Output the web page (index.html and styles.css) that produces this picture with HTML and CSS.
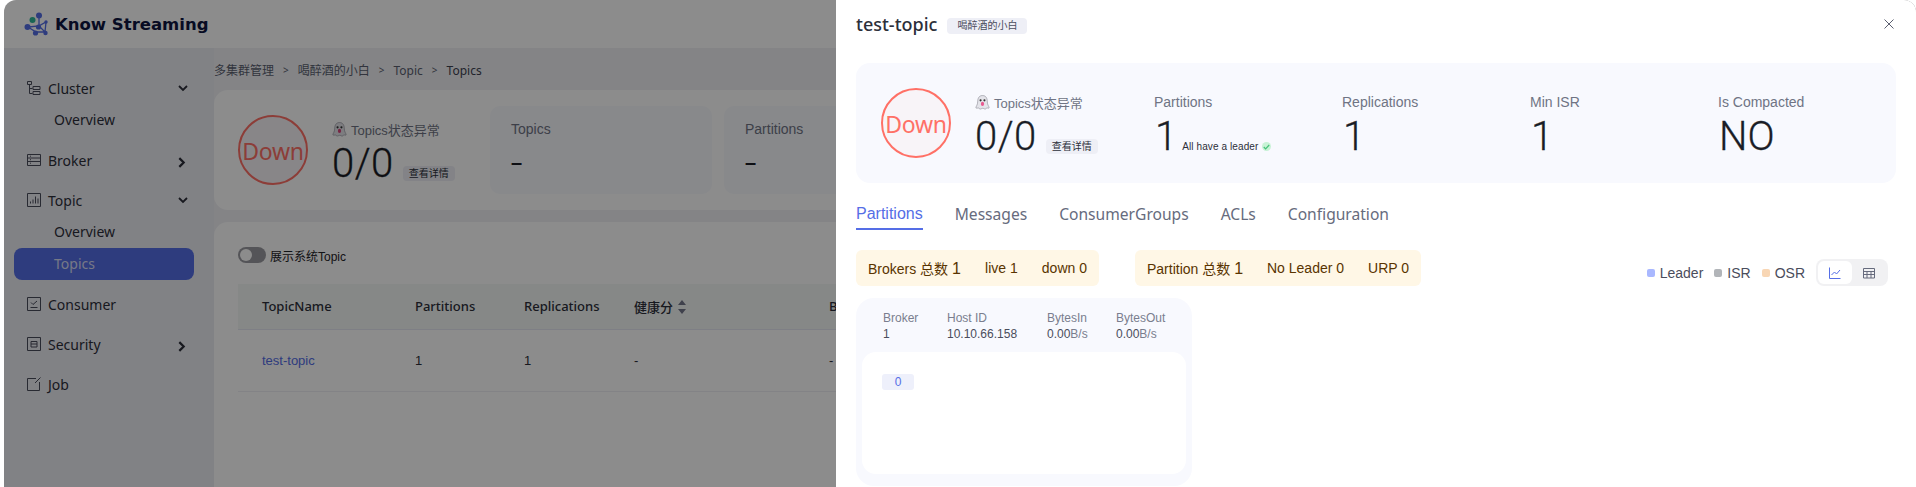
FILE: index.html
```html
<!DOCTYPE html>
<html lang="zh">
<head>
<meta charset="utf-8">
<title>Know Streaming</title>
<link rel="stylesheet" href="styles.css">
</head>
<body>
<div class="shell">
  <header class="topbar">
    <svg class="logo" width="24" height="24" viewBox="0 0 24 24">
      <g stroke="#556ee6" stroke-width="1.3" fill="none"><path d="M15 4L15 14L4 15L12 20L21 20L22 10L15 14L21 20"/></g>
      <circle cx="15" cy="3.5" r="3" fill="#556ee6"/><circle cx="8.500" cy="8" r="3" fill="#2fb89a"/><circle cx="3.500" cy="15" r="3" fill="#556ee6"/><circle cx="14.500" cy="15" r="2.600" fill="#556ee6"/><circle cx="11.500" cy="21" r="2.600" fill="#556ee6"/><circle cx="21.500" cy="21" r="2.200" fill="#556ee6"/><circle cx="22" cy="10" r="1.700" fill="#556ee6"/>
    </svg>
    <span class="brand">Know Streaming</span>
  </header>
  <div class="layout">
    <nav class="sidebar">
      <div class="nav-group">
        <div class="nav-item">
          <svg class="nav-icon" viewBox="0 0 14 14"><path d="M.5.500h4v3h-4zM2.500 3.500v9h3M2.500 7.500h3M6 5.500h7v3H6zM6 10.500h7v3H6z"/></svg>
          <span class="nav-label">Cluster</span>
          <svg class="chev" viewBox="0 0 10 10"><path d="M1 3l4 4 4-4"/></svg>
        </div>
        <div class="nav-sub">Overview</div>
      </div>
      <div class="nav-group">
        <div class="nav-item">
          <svg class="nav-icon" viewBox="0 0 14 14"><path d="M.5 1.500h13v11H.5zM.5 5h13M.5 8.500h13M3 3.200h1M3 6.700h1M3 10.200h1"/></svg>
          <span class="nav-label">Broker</span>
          <svg class="chev chev-right" viewBox="0 0 10 10"><path d="M3 1l4 4-4 4"/></svg>
        </div>
      </div>
      <div class="nav-group">
        <div class="nav-item">
          <svg class="nav-icon" viewBox="0 0 14 14"><path d="M.5.500h13v13H.5zM3.500 10.500v-2M6 10.500v-4M8.500 10.500v-7M11 10.500v-5"/></svg>
          <span class="nav-label">Topic</span>
          <svg class="chev" viewBox="0 0 10 10"><path d="M1 3l4 4 4-4"/></svg>
        </div>
        <div class="nav-sub">Overview</div>
        <div class="nav-sub nav-active">Topics</div>
      </div>
      <div class="nav-group">
        <div class="nav-item">
          <svg class="nav-icon" viewBox="0 0 14 14"><path d="M.5.500h13v13H.5zM3.500 10.500h7M4 5.500l2 2 4-3.500"/></svg>
          <span class="nav-label">Consumer</span>
        </div>
      </div>
      <div class="nav-group">
        <div class="nav-item">
          <svg class="nav-icon" viewBox="0 0 14 14"><path d="M.5.500h13v13H.5zM4 4.500h6v5.500H4zM4 7h6"/></svg>
          <span class="nav-label">Security</span>
          <svg class="chev chev-right" viewBox="0 0 10 10"><path d="M3 1l4 4-4 4"/></svg>
        </div>
      </div>
      <div class="nav-group">
        <div class="nav-item">
          <svg class="nav-icon" viewBox="0 0 14 14"><path d="M9 1.500H.5v12h12V5M13.500.500L8 6"/></svg>
          <span class="nav-label">Job</span>
        </div>
      </div>
    </nav>
    <main class="main">
      <div class="crumbs">
        <span>多集群管理</span><span class="sep">&gt;</span><span>喝醉酒的小白</span><span class="sep">&gt;</span><span>Topic</span><span class="sep">&gt;</span><span class="crumb-last">Topics</span>
      </div>
      <section class="summary">
        <div class="down-ring">Down</div>
        <div class="status status-bg">
          <div class="status-title">
            <svg class="ghost" viewBox="0 0 14 14"><path d="M7 .5C3.800.5 2.500 3 2.500 6.500 2.500 9 1 10.500.8 12c1.200.8 2-.3 2.800.3.900.9 1.600 1 2.400.5.800-.5 1.600-.5 2.400 0 .9.500 1.600.4 2.400-.5.800-.6 1.600.5 2.400-.3-.2-1.500-1.700-3-1.700-5.500C11.500 3 10.200.5 7 .5z" fill="#e4e4ea" stroke="#8f8f98" stroke-width=".6"/><circle cx="5.200" cy="5" r="1" fill="#333"/><circle cx="8.800" cy="5" r="1" fill="#333"/><ellipse cx="7" cy="8.300" rx="1.500" ry="2" fill="#d8457b"/></svg>
            <span>Topics状态异常</span>
          </div>
          <div class="status-value"><span class="big-num">0/0</span><span class="detail-btn">查看详情</span></div>
        </div>
        <div class="mini-card"><div class="mini-label">Topics</div><div class="mini-value">–</div></div>
        <div class="mini-card"><div class="mini-label">Partitions</div><div class="mini-value">–</div></div>
      </section>
      <section class="list-card">
        <div class="switch-row"><span class="switch"><span class="switch-knob"></span></span><span class="switch-text">展示系统Topic</span></div>
        <table class="grid">
          <thead>
            <tr><th class="c-name">TopicName</th><th class="c-part">Partitions</th><th class="c-rep">Replications</th><th class="c-health">健康分 <svg class="sort" width="8" height="14" viewBox="0 0 8 14"><path d="M4 0l4 5H0zM4 14l4-5H0z"/></svg></th><th>B</th></tr>
          </thead>
          <tbody>
            <tr><td class="c-name link">test-topic</td><td>1</td><td>1</td><td>-</td><td>-</td></tr>
          </tbody>
        </table>
      </section>
    </main>
  </div>
  <div class="mask"></div>
  <aside class="drawer">
    <div class="drawer-head">
      <span class="drawer-title">test-topic</span>
      <span class="drawer-tag">喝醉酒的小白</span>
      <svg class="close" viewBox="0 0 10 10"><path d="M.5.500l9 9M9.500.500l-9 9"/></svg>
    </div>
    <section class="stats">
      <div class="down-ring ring-live">Down</div>
      <div class="status">
        <div class="status-title">
          <svg class="ghost" viewBox="0 0 14 14"><path d="M7 .5C3.800.5 2.500 3 2.500 6.500 2.500 9 1 10.500.8 12c1.200.8 2-.3 2.800.3.900.9 1.600 1 2.400.5.800-.5 1.600-.5 2.400 0 .9.500 1.600.4 2.400-.5.800-.6 1.600.5 2.400-.3-.2-1.500-1.700-3-1.700-5.500C11.500 3 10.200.5 7 .5z" fill="#e4e4ea" stroke="#8f8f98" stroke-width=".6"/><circle cx="5.200" cy="5" r="1" fill="#333"/><circle cx="8.800" cy="5" r="1" fill="#333"/><ellipse cx="7" cy="8.300" rx="1.500" ry="2" fill="#e85a90"/></svg>
          <span>Topics状态异常</span>
        </div>
        <div class="status-value"><span class="big-num">0/0</span><span class="detail-btn">查看详情</span></div>
      </div>
      <div class="metric">
        <div class="metric-label">Partitions</div>
        <div class="metric-row"><span class="metric-num">1</span><span class="leader-note">All have a leader</span><span class="check"><svg width="7" height="6" viewBox="0 0 7 6"><path d="M.8 3l1.800 1.800L6.200 1"/></svg></span></div>
      </div>
      <div class="metric"><div class="metric-label">Replications</div><div class="metric-row"><span class="metric-num">1</span></div></div>
      <div class="metric"><div class="metric-label">Min ISR</div><div class="metric-row"><span class="metric-num">1</span></div></div>
      <div class="metric"><div class="metric-label">Is Compacted</div><div class="metric-row"><span class="metric-num">NO</span></div></div>
    </section>
    <div class="tabs">
      <span class="tab tab-active">Partitions</span>
      <span class="tab">Messages</span>
      <span class="tab">ConsumerGroups</span>
      <span class="tab">ACLs</span>
      <span class="tab">Configuration</span>
    </div>
    <div class="filters">
      <div class="pill pill-a"><span>Brokers 总数 <b class="pill-num">1</b></span><span>live 1</span><span>down 0</span></div>
      <div class="pill pill-b"><span>Partition 总数 <b class="pill-num">1</b></span><span>No Leader 0</span><span>URP 0</span></div>
      <div class="legend">
        <span class="key"><i class="dot dot-leader"></i>Leader</span>
        <span class="key"><i class="dot dot-isr"></i>ISR</span>
        <span class="key"><i class="dot dot-osr"></i>OSR</span>
        <div class="views">
          <span class="view view-on"><svg width="12" height="12" viewBox="0 0 12 12"><path d="M.5.500v11h11M2.500 8l3-3 2 2 3.500-4"/></svg></span>
          <span class="view"><svg class="view-grid" width="12" height="12" viewBox="0 0 12 12"><path d="M.5 1.500h11v9.500H.5zM.5 4.500h11M.5 7.500h11M4 4.500v6.500M8 4.500v6.500"/></svg></span>
        </div>
      </div>
    </div>
    <div class="broker">
      <div class="broker-info">
        <div class="info info-broker"><div class="info-label">Broker</div><div>1</div></div>
        <div class="info info-host"><div class="info-label">Host ID</div><div>10.10.66.158</div></div>
        <div class="info info-in"><div class="info-label">BytesIn</div><div>0.00<span class="unit">B/s</span></div></div>
        <div class="info"><div class="info-label">BytesOut</div><div>0.00<span class="unit">B/s</span></div></div>
      </div>
      <div class="broker-body"><span class="chip">0</span></div>
    </div>
  </aside>
</div>
</body>
</html>
```
FILE: styles.css
```css
* { box-sizing: border-box; }
html, body { height: 100%; }
body {
  margin: 0;
  padding-left: 4px;
  background: #fff;
  overflow: hidden;
  font-family: "Liberation Sans", "Noto Sans CJK SC", sans-serif;
  color: #1f2329;
}
.shell {
  position: relative;
  height: 487px;
  overflow: hidden;
  border-radius: 12px 12px 0 0;
  background: #f0f1f5;
  display: flex;
  flex-direction: column;
}
.topbar {
  height: 48px;
  flex: none;
  background: #fff;
  display: flex;
  align-items: center;
  padding-left: 20px;
  gap: 7px;
}
.brand {
  font-family: "DejaVu Sans", sans-serif;
  font-weight: 700;
  font-size: 16.500px;
  color: #0e1440;
}
.layout { flex: 1; display: flex; min-height: 0; }
.sidebar { width: 210px; flex: none; padding: 24px 20px 0 10px; background: #ecedf3; }
.nav-group { margin-bottom: 8px; }
.nav-item {
  height: 32px;
  display: flex;
  align-items: center;
  padding-left: 13px;
  font-family: "Noto Sans", sans-serif;
  font-size: 14px;
  color: #2c2f3a;
}
.nav-icon { width: 14px; height: 14px; fill: none; stroke: #4a4d5c; stroke-width: 1; flex: none; }
.nav-label { margin-left: 7px; flex: 1; }
.chev { width: 10px; height: 10px; fill: none; stroke: #2c2f3a; stroke-width: 1.800; margin-right: 6px; }
.chev-right { width: 11px; height: 11px; stroke-width: 2; margin: 4px 7px 0 0; }
.nav-sub {
  height: 32px;
  line-height: 32px;
  padding-left: 40px;
  font-family: "Noto Sans", sans-serif;
  font-size: 14px;
  color: #2c2f3a;
}
.nav-active { background: #556ee6; color: #d8dcf5; border-radius: 8px; }
.main { flex: 1; min-width: 0; padding-top: 12px; display: flex; flex-direction: column; }
.crumbs {
  height: 20px;
  margin-bottom: 10px;
  display: flex;
  align-items: center;
  gap: 9px;
  font-family: "Noto Sans", "Noto Sans CJK SC", sans-serif;
  font-size: 12px;
  color: #5b5f70;
}
.sep { font-size: 10px; }
.crumb-last { color: #3e4250; }
.summary {
  height: 120px;
  flex: none;
  background: #fff;
  border-radius: 14px;
  display: flex;
  align-items: center;
  padding-left: 24px;
  margin-bottom: 12px;
}
.down-ring {
  width: 70px;
  height: 70px;
  flex: none;
  border-radius: 50%;
  border: 2px solid #ff7066;
  background: #f8f4f8;
  color: #ff7066;
  display: flex;
  align-items: center;
  justify-content: center;
  font-family: "Noto Sans", sans-serif;
  font-size: 23px;
  letter-spacing: -.2px;
  padding-top: 2px;
}
.status { margin-left: 24px; flex: none; width: 179px; padding-top: 6px; }
.status-bg { width: 158px; }
.status-title {
  display: flex;
  align-items: center;
  gap: 4px;
  height: 20px;
  font-size: 13px;
  color: #6f7484;
}
.ghost { width: 15px; height: 15px; flex: none; }
.status-value { display: flex; align-items: flex-end; margin-top: 2px; }
.big-num {
  font-family: "Roboto", sans-serif;
  font-weight: 300;
  -webkit-text-stroke: .3px #1a1d26;
  font-size: 40px;
  line-height: 46px;
  color: #1a1d26;
  letter-spacing: .5px;
}
.detail-btn {
  margin-left: 9px;
  margin-bottom: 6px;
  height: 15px;
  line-height: 15px;
  padding: 0 6px;
  background: #eeeff6;
  border-radius: 4px;
  font-size: 10px;
  color: #2c2f3a;
}
.mini-card {
  width: 222px;
  height: 88px;
  flex: none;
  margin-right: 12px;
  background: #f8f9fe;
  border-radius: 10px;
  padding: 13px 21px;
}
.mini-label { font-size: 14px; color: #6f7484; line-height: 20px; }
.mini-value { font-size: 20px; font-weight: 700; line-height: 24px; color: #1a1d26; margin-top: 11px; }
.list-card { flex: 1; background: #fff; border-radius: 14px 14px 0 0; padding: 25px 24px 0; }
.switch-row { display: flex; align-items: center; height: 16px; margin-bottom: 21px; gap: 4px; }
.switch { width: 28px; height: 16px; border-radius: 8px; background: #9a9aa0; position: relative; flex: none; }
.switch-knob { position: absolute; left: 2px; top: 2px; width: 12px; height: 12px; border-radius: 50%; background: #fff; }
.switch-text { font-size: 12px; color: #1f2329; }
.grid { width: 900px; border-collapse: collapse; table-layout: fixed; }
.grid th {
  height: 45px;
  text-align: left;
  font-family: "Noto Sans", "Noto Sans CJK SC", sans-serif;
  font-weight: 500;
  font-size: 13px;
  color: #2c2f3a;
  background: #f5f8f6;
  border-bottom: 1px solid #e6e8f2;
}
.grid td { height: 62px; font-size: 13px; color: #2c2f3a; border-bottom: 1px solid #eeeff4; }
.c-name { width: 176px; padding-left: 24px; }
.c-part { width: 109px; }
.c-rep { width: 110px; }
.c-health { width: 195px; }
.grid .link { color: #556ee6; }
.sort { fill: #74778a; vertical-align: -2px; margin-left: 2px; }
.mask { position: absolute; inset: 0; background: rgba(0, 0, 0, .45); }
.drawer {
  position: absolute;
  top: 0;
  right: 0;
  bottom: 0;
  left: 832px;
  background: #fff;
  padding: 0 20px;
  display: flex;
  flex-direction: column;
}
.drawer-head { height: 63px; flex: none; display: flex; align-items: center; padding-bottom: 15px; }
.drawer-title { font-family: "Noto Sans", sans-serif; font-weight: 500; font-size: 18px; color: #2c2f3a; }
.drawer-tag {
  margin-left: 10px;
  margin-top: 3px;
  width: 80px;
  height: 16px;
  line-height: 16px;
  text-align: center;
  background: #eeeff6;
  border-radius: 4px;
  font-size: 10px;
  color: #4a4d5c;
}
.close { width: 10px; height: 10px; margin-left: auto; margin-right: 2px; fill: none; stroke: #5b5f70; stroke-width: 1; }
.stats {
  height: 120px;
  flex: none;
  background: #f8f9fe;
  border-radius: 14px;
  display: flex;
  align-items: center;
  padding-left: 25px;
}
.ring-live { background: #f8f4f8; }
.metric { width: 188px; flex: none; padding-top: 6px; }
.metric-label { font-size: 14px; color: #6f7484; line-height: 20px; }
.metric-row { display: flex; align-items: flex-end; margin-top: 2px; height: 46px; }
.metric-num {
  font-family: "Roboto", sans-serif;
  font-weight: 300;
  -webkit-text-stroke: .3px #1a1d26;
  font-size: 40px;
  line-height: 46px;
  color: #1a1d26;
  margin-left: 1px;
}
.leader-note { font-size: 10px; letter-spacing: .1px; color: #2c2f3a; margin-left: 5px; margin-bottom: 8px; }
.check {
  width: 9px;
  height: 9px;
  border-radius: 50%;
  background: #c8f2d6;
  margin-left: 4px;
  margin-bottom: 9px;
  display: flex;
  align-items: center;
  justify-content: center;
}
.check svg { fill: none; stroke: #45c27a; stroke-width: 1.200; }
.tabs {
  display: flex;
  gap: 32px;
  height: 47px;
  flex: none;
  align-items: flex-end;
  font-family: "Noto Sans", sans-serif;
  font-size: 15.600px;
  color: #666b7d;
}
.tab { height: 34px; line-height: 36px; }
.tab-active {
  font-family: "Liberation Sans", sans-serif;
  font-size: 16px;
  color: #556ee6;
  line-height: 36px;
  border-bottom: 2px solid #556ee6;
}
.filters { display: flex; align-items: center; height: 36px; margin-top: 20px; flex: none; padding-right: 8px; }
.pill {
  height: 36px;
  display: flex;
  align-items: center;
  justify-content: space-between;
  white-space: nowrap;
  background: #fff7e6;
  border-radius: 6px;
  padding: 0 12px;
  font-size: 14px;
  color: #593400;
}
.pill-a { width: 243px; }
.pill-b { width: 286px; margin-left: 36px; }
.pill-num { font-weight: 400; font-size: 16px; }
.legend { margin-left: auto; display: flex; align-items: center; font-size: 14px; color: #4a4d5c; margin-top: 9px; }
.key { display: flex; align-items: center; gap: 5px; margin-right: 11px; }
.dot { width: 8px; height: 8px; border-radius: 2px; }
.dot-leader { background: #a9b8ff; }
.dot-isr { background: #b2b5b9; }
.dot-osr { background: #f8d6b4; }
.views { display: flex; width: 72px; height: 27px; padding: 2px; background: #f1f1f3; border-radius: 8px; }
.view { flex: 1; display: flex; align-items: center; justify-content: center; border-radius: 6px; }
.view svg { fill: none; stroke: #556ee6; stroke-width: 1; }
.view-on { background: #fff; }
.view svg.view-grid { stroke: #666b7d; }
.broker {
  width: 336px;
  height: 188px;
  flex: none;
  margin-top: 12px;
  background: #f8f9fe;
  border-radius: 18px;
  padding: 0 6px;
}
.broker-info { height: 54px; display: flex; padding: 12px 0 0 21px; font-size: 12px; line-height: 16px; color: #4a4d5c; }
.info-label { color: #7a7e8e; }
.unit { color: #7a7e8e; }
.info-broker { width: 64px; }
.info-host { width: 100px; }
.info-in { width: 69px; }
.broker-body { height: 122px; background: #fff; border-radius: 14px; padding: 22px 20px; }
.chip {
  display: block;
  width: 32px;
  height: 16px;
  line-height: 16px;
  text-align: center;
  background: #eef0fb;
  border-radius: 3px;
  font-size: 12px;
  color: #556ee6;
}
```
